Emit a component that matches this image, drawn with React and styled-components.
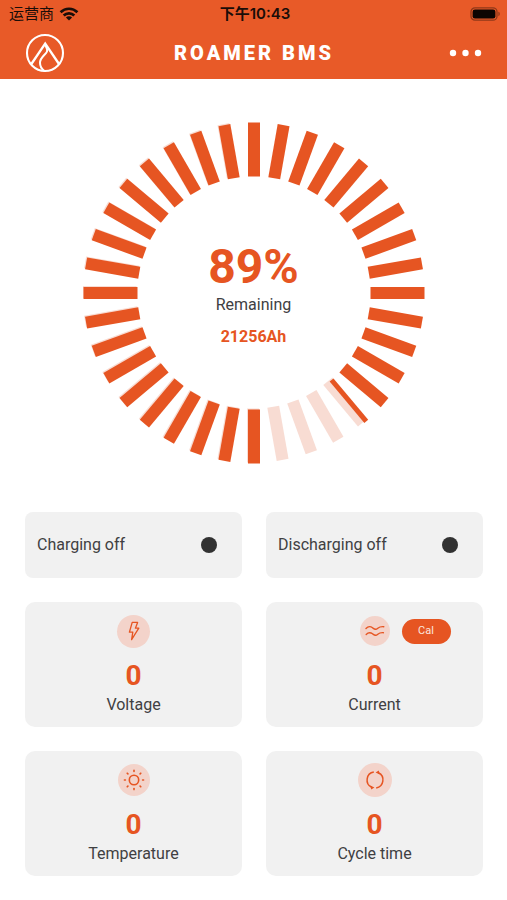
import React from "react";
import styled, { createGlobalStyle } from "styled-components";

const BRAND = "#e65522";
const HEADER = "#e85a28";
const PALE = "#f8dcd3";

const GlobalStyle = createGlobalStyle`
  * { box-sizing: border-box; }
  body {
    margin: 0;
    background: #fff;
    color: #404042;
    font-family: "Liberation Sans Narrow", Roboto, "Noto Sans CJK SC", sans-serif;
    font-size: 16px;
    line-height: 20px;
  }
  button { font: inherit; color: inherit; border: 0; padding: 0; cursor: pointer; }
  svg { display: block; }
`;

const Header = styled.header`
  background: ${HEADER};
`;

const StatusBar = styled.div`
  display: grid;
  grid-template-columns: 1fr auto 1fr;
  align-items: center;
  height: 27px;
  padding: 0 6px 0 9px;
  color: #1a0d08;
  font-family: Inter, "Noto Sans CJK SC", sans-serif;
  font-size: 15px;
`;

const Carrier = styled.div`
  display: flex;
  align-items: center;
  gap: 5px;
`;

const Clock = styled.time`
  font-weight: 600;
`;

const BatteryIcon = styled.svg`
  justify-self: end;
`;

const TitleBar = styled.div`
  display: grid;
  grid-template-columns: 1fr auto 1fr;
  align-items: center;
  height: 52px;
  padding: 0 24px 0 25px;
  color: #fff;
`;

const Title = styled.h1`
  margin: 0;
  font-family: Roboto, sans-serif;
  font-size: 20px;
  font-weight: 900;
  letter-spacing: 3px;
  line-height: 24px;
`;

const IconButton = styled.button`
  justify-self: ${(p) => p.$side};
  background: none;
`;

const GaugeSection = styled.section`
  display: grid;
  justify-items: center;
  align-items: center;
  padding: 43px 24px 48px;
`;

const GaugeChart = styled.svg`
  grid-area: 1 / 1;
  width: 100%;
  max-width: 342px;
  height: auto;
`;

const GaugeText = styled.div`
  grid-area: 1 / 1;
  display: flex;
  flex-direction: column;
  align-items: center;
  gap: 12px;
  padding-top: 4px;
`;

const Percent = styled.strong`
  color: ${BRAND};
  font-size: 48px;
  line-height: 48px;
  margin-bottom: -8px;
`;

const Capacity = styled.strong`
  color: ${BRAND};
  font-size: 16px;
`;

const Cards = styled.main`
  display: grid;
  grid-template-columns: 1fr 1fr;
  gap: 24px;
  padding: 0 24px 24px 25px;
`;

const SwitchCard = styled.button`
  display: flex;
  align-items: center;
  justify-content: space-between;
  min-height: 66px;
  padding: 0 25px 0 12px;
  border-radius: 8px;
  background: #f1f1f1;
  text-align: left;
`;

const Dot = styled.span`
  width: 16px;
  height: 16px;
  border-radius: 50%;
  background: ${(p) => (p.$on ? BRAND : "#323232")};
`;

const MetricCard = styled.section`
  display: flex;
  flex-direction: column;
  align-items: center;
  min-height: 125px;
  padding: 12px 12px 11px;
  border-radius: 10px;
  background: #f1f1f1;
`;

const MetricTop = styled.div`
  display: grid;
  grid-template-columns: 1fr auto 1fr;
  align-items: center;
  align-self: stretch;
  height: 34px;
`;

const IconDisc = styled.span`
  grid-column: 2;
  display: grid;
  place-items: center;
  width: ${(p) => p.$size}px;
  height: ${(p) => p.$size}px;
  border-radius: 50%;
  background: #f3d3ca;
  color: ${BRAND};
`;

const CalButton = styled.button`
  justify-self: start;
  width: 49px;
  height: 25px;
  margin-left: 12px;
  border-radius: 13px;
  background: ${BRAND};
  color: #fbe6de;
  font-size: 11px;
  line-height: 16px;
`;

const Value = styled.strong`
  margin-top: 12px;
  color: ${BRAND};
  font-size: 28px;
  line-height: 32px;
`;

const MetricLabel = styled.span`
  margin-top: 3px;
`;

const Wifi = () => (
  <svg width="20" height="14" viewBox="0 0 20 14" fill="none" stroke="currentColor" strokeWidth="2.7" aria-label="Wi-Fi">
    <path d="M1.6 5.2a12 12 0 0 1 16.8 0" />
    <path d="M4.7 8.5a7.5 7.5 0 0 1 10.6 0" />
    <path d="M10 13.6 6.9 10.5a4.4 4.4 0 0 1 6.2 0Z" fill="currentColor" stroke="none" />
  </svg>
);

const Battery = () => (
  <BatteryIcon width="31" height="14" viewBox="0 0 31 14" aria-label="Battery full">
    <rect x="1" y="0.8" width="26" height="12.4" rx="4" fill="none" stroke="#8f3819" strokeWidth="1.3" />
    <rect x="2.6" y="2.4" width="22.8" height="9.2" rx="2.4" fill="#0b0502" />
    <path d="M28.4 4.8c1.8.5 1.8 3.9 0 4.4Z" fill="#8f3819" />
  </BatteryIcon>
);

const Logo = () => (
  <svg width="40" height="40" viewBox="0 0 40 40" fill="none" stroke="currentColor" strokeWidth="2">
    <circle cx="20" cy="20" r="18" strokeWidth="2.1" />
    <path d="M6.4 31 20.2 10.6 34 31" strokeWidth="2.3" />
    <path d="M20.2 11.5c.4 2.800 2.800 4.200 1.800 7-1.200 3.200-7 5.800-7 11.200 0 3 1.400 6 4.200 8.200" />
  </svg>
);

const More = () => (
  <svg width="34" height="20" viewBox="0 0 34 20" fill="currentColor">
    <circle cx="4" cy="10" r="3.2" />
    <circle cx="16.5" cy="10" r="3.2" />
    <circle cx="29" cy="10" r="3.2" />
  </svg>
);

const Bolt = () => (
  <svg width="18" height="22" viewBox="0 0 18 22" fill="none" stroke="currentColor" strokeWidth="1.3" strokeLinejoin="round">
    <path d="M7.200 2.400H12.600L10.400 8.200H13.800L6.600 19.600L7.800 12.200H4.400Z" />
  </svg>
);

const Waves = () => (
  <svg width="20" height="12" viewBox="0 0 20 12" fill="none" stroke="currentColor" strokeWidth="1.4" strokeLinecap="round">
    <path d="M1 3.400c2.300-2.400 4.400-2.200 6.600-.6 2.600 1.800 3.400 2 5.200.4 1.800-1.500 3.600-1.700 6-1.500" />
    <path d="M1.200 9.400c2.300-2.400 4.200-2.200 6.400-.6 2.600 1.800 3.400 2 5.200.4 1.800-1.500 3.400-1.700 5.600-1.500" />
  </svg>
);

const SunRays = [0, 45, 90, 135, 180, 225, 270, 315];

const Sun = () => (
  <svg width="22" height="22" viewBox="-11 -11 22 22" fill="none" stroke="currentColor" strokeWidth="1.6" strokeLinecap="round">
    <circle r="4.7" />
    {SunRays.map((a) => (
      <path key={a} d="M0-8.600V-9.600" transform={`rotate(${a})`} />
    ))}
  </svg>
);

const Cycle = () => (
  <svg width="20" height="20" viewBox="-10 -10 20 20" fill="none" stroke="currentColor" strokeWidth="1.5">
    <path d="M-1.200-7.900A8 8 0 0 0-3.400 7.200" />
    <path d="M1.200 7.900A8 8 0 0 0 3.400-7.200" />
    <path d="M.6-7.600 3.800-9.400 4.600-5.400Z" fill="currentColor" stroke="none" />
    <path d="M-.6 7.600-3.800 9.400-4.600 5.400Z" fill="currentColor" stroke="none" />
  </svg>
);

const TICKS = Array.from({ length: 36 }, (_, i) => i * 10);

const Gauge = () => (
  <GaugeChart viewBox="-171 -171 342 342" role="img" aria-label="89% remaining">
    <g fill={PALE} transform="translate(-1 -1)">
      {TICKS.filter((a) => a > 130).map((a) => (
        <rect key={a} x="-6" y="-170.5" width="12" height="54" transform={`rotate(${a})`} />
      ))}
    </g>
    <g fill={BRAND}>
      {TICKS.filter((a) => a < 140 || a > 170).map((a) => (
        <rect key={a} x="-6" y="-170.5" width="12" height="54" transform={`rotate(${a})`} />
      ))}
      <rect x="-6" y="-170.5" width="5" height="54" transform="rotate(140)" />
    </g>
  </GaugeChart>
);

const METRICS = [
  { label: "Voltage", value: 0, Icon: Bolt, size: 33 },
  { label: "Current", value: 0, Icon: Waves, size: 30, calibrate: true },
  { label: "Temperature", value: 0, Icon: Sun, size: 32 },
  { label: "Cycle time", value: 0, Icon: Cycle, size: 34 },
];

export default function App() {
  return (
    <>
      <GlobalStyle />
      <Header>
        <StatusBar>
          <Carrier>
            运营商
            <Wifi />
          </Carrier>
          <Clock>下午10:43</Clock>
          <Battery />
        </StatusBar>
        <TitleBar>
          <IconButton $side="start" aria-label="Home">
            <Logo />
          </IconButton>
          <Title>ROAMER BMS</Title>
          <IconButton $side="end" aria-label="More">
            <More />
          </IconButton>
        </TitleBar>
      </Header>
      <GaugeSection>
        <Gauge />
        <GaugeText>
          <Percent>89%</Percent>
          <span>Remaining</span>
          <Capacity>21256Ah</Capacity>
        </GaugeText>
      </GaugeSection>
      <Cards>
        <SwitchCard aria-pressed="false">
          Charging off
          <Dot />
        </SwitchCard>
        <SwitchCard aria-pressed="false">
          Discharging off
          <Dot />
        </SwitchCard>
        {METRICS.map(({ label, value, Icon, size, calibrate }) => (
          <MetricCard key={label}>
            <MetricTop>
              <IconDisc $size={size}>
                <Icon />
              </IconDisc>
              {calibrate && <CalButton>Cal</CalButton>}
            </MetricTop>
            <Value>{value}</Value>
            <MetricLabel>{label}</MetricLabel>
          </MetricCard>
        ))}
      </Cards>
    </>
  );
}
